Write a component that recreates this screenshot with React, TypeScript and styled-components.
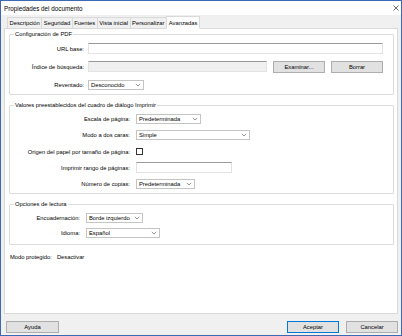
import styled, { createGlobalStyle } from 'styled-components';

const GlobalStyle = createGlobalStyle`
    html, body {
        margin: 0;
        padding: 0;
        background: #ffffff;
    }
    body {
        font-family: "Liberation Sans", Arial, sans-serif;
        font-size: 5.8px;
        color: #000000;
    }
    * {
        box-sizing: border-box;
    }
`;

const tabs = ['Descripción', 'Seguridad', 'Fuentes', 'Vista inicial', 'Personalizar', 'Avanzadas'];

const Chevron = () => (
    <svg width="6" height="4" viewBox="0 0 6 4">
        <path d="M0.8 0.9 L3 3 L5.2 0.9" fill="none" stroke="#666" strokeWidth="0.7" />
    </svg>
);

interface SelectProps {
    value: string;
    width: number;
}

const Select = ({ value, width }: SelectProps) => (
    <SelectBox $width={width}>
        <span>{value}</span>
        <Chevron />
    </SelectBox>
);

const App = () => {
    return (
        <>
            <GlobalStyle />
            <Window>
                <TitleBar>
                    <span>Propiedades del documento</span>
                    <svg width="6" height="6" viewBox="0 0 6 6">
                        <path d="M0.5 0.5 L5.5 5.5 M5.5 0.5 L0.5 5.5" stroke="#444" strokeWidth="0.8" />
                    </svg>
                </TitleBar>
                <TabStrip>
                    {tabs.map((t) => (
                        <Tab key={t} $active={t === 'Avanzadas'}>
                            {t}
                        </Tab>
                    ))}
                </TabStrip>
                <Panel>
                    <Group>
                        <Legend>Configuración de PDF</Legend>
                        <FormGrid $labelWidth={74} $rowGap={7} $rowHeight={11}>
                            <Label>URL base:</Label>
                            <TextInput />
                            <Label>Índice de búsqueda:</Label>
                            <InlineRow>
                                <TextInput $disabled />
                                <Button $width={52}>Examinar...</Button>
                                <Button $width={52}>Borrar</Button>
                            </InlineRow>
                            <Label>Reventado:</Label>
                            <Select value="Desconocido" width={56} />
                        </FormGrid>
                    </Group>
                    <Group>
                        <Legend>Valores preestablecidos del cuadro de diálogo Imprimir</Legend>
                        <FormGrid $labelWidth={120} $rowGap={6.25} $rowHeight={10} $colGap={6}>
                            <Label>Escala de página:</Label>
                            <Select value="Predeterminada" width={65} />
                            <Label>Modo a dos caras:</Label>
                            <Select value="Simple" width={114} />
                            <Label>Origen del papel por tamaño de página:</Label>
                            <Checkbox />
                            <Label>Imprimir rango de páginas:</Label>
                            <TextInput $width={96} />
                            <Label>Número de copias:</Label>
                            <Select value="Predeterminada" width={59} />
                        </FormGrid>
                    </Group>
                    <Group $bottom={6}>
                        <Legend>Opciones de lectura</Legend>
                        <FormGrid $labelWidth={70} $rowGap={5} $rowHeight={10} $colGap={6}>
                            <Label>Encuadernación:</Label>
                            <Select value="Borde izquierdo" width={57} />
                            <Label>Idioma:</Label>
                            <Select value="Español" width={74} />
                        </FormGrid>
                    </Group>
                    <ProtectedRow>
                        <span>Modo protegido:</span>
                        <span>Desactivar</span>
                    </ProtectedRow>
                </Panel>
                <Footer>
                    <Button $width={53} $height={12}>
                        Ayuda
                    </Button>
                    <FooterRight>
                        <Button $width={52} $height={12} $primary>
                            Aceptar
                        </Button>
                        <Button $width={52} $height={12}>
                            Cancelar
                        </Button>
                    </FooterRight>
                </Footer>
            </Window>
        </>
    );
};

const Window = styled.div`
    width: 402px;
    height: 336px;
    border: 1px solid #3d68b4;
    background: #f0f0f0;
    display: flex;
    flex-direction: column;
`;

const TitleBar = styled.div`
    height: 14px;
    background: #ffffff;
    display: flex;
    align-items: center;
    justify-content: space-between;
    padding: 0 2px 0 3px;
    font-size: 6.3px;
`;

const TabStrip = styled.div`
    display: flex;
    align-items: flex-end;
    height: 13px;
    padding-left: 7px;
    position: relative;
    z-index: 1;
`;

const Tab = styled.div<{ $active?: boolean }>`
    height: ${(p) => (p.$active ? '13px' : '11px')};
    padding: 0 ${(p) => (p.$active ? '2px' : '1.5px')};
    display: flex;
    align-items: center;
    border: 1px solid #d9d9d9;
    border-bottom: ${(p) => (p.$active ? '1px solid #ffffff' : 'none')};
    margin-left: -1px;
    background: ${(p) => (p.$active ? '#ffffff' : '#f0f0f0')};
    margin-bottom: ${(p) => (p.$active ? '-1px' : '0')};
    white-space: nowrap;
`;

const Panel = styled.div`
    height: 286px;
    margin: 0 3px;
    background: #ffffff;
    border: 1px solid #d9d9d9;
    padding: 1px 3px 0 4px;
    display: flex;
    flex-direction: column;
`;

const Group = styled.fieldset<{ $bottom?: number }>`
    margin: 0 0 6px 0;
    padding: 5px 0 ${(p) => p.$bottom ?? 4}px 0;
    border: 1px solid #dcdcdc;
    border-radius: 1px;
    min-width: 0;
`;

const Legend = styled.legend`
    margin-left: 4px;
    padding: 0 1px;
    line-height: 8px;
    height: 8px;
`;

const FormGrid = styled.div<{ $labelWidth: number; $rowGap: number; $rowHeight: number; $colGap?: number }>`
    display: grid;
    grid-template-columns: ${(p) => p.$labelWidth}px 1fr;
    grid-auto-rows: ${(p) => p.$rowHeight}px;
    row-gap: ${(p) => p.$rowGap}px;
    column-gap: ${(p) => p.$colGap ?? 4}px;
    align-items: center;
    justify-items: start;
    padding-right: 10px;
`;

const Label = styled.div`
    justify-self: end;
    white-space: nowrap;
`;

const InlineRow = styled.div`
    display: flex;
    gap: 6px;
    width: 100%;
    height: 12px;
    align-items: center;
`;

const TextInput = styled.div<{ $width?: number; $disabled?: boolean }>`
    width: ${(p) => (p.$width ? `${p.$width}px` : '100%')};
    flex: ${(p) => (p.$width ? 'none' : '1')};
    height: 11px;
    background: ${(p) => (p.$disabled ? '#f0f0f0' : '#ffffff')};
    border: 1px solid #e3e3e3;
    border-top-color: #9a9a9a;
`;

const SelectBox = styled.div<{ $width: number }>`
    width: ${(p) => p.$width}px;
    height: 10px;
    background: #ffffff;
    border: 1px solid #c4c4c4;
    display: flex;
    align-items: center;
    justify-content: space-between;
    padding: 0 2px 0 2px;
    white-space: nowrap;
`;

const Checkbox = styled.div`
    width: 7px;
    height: 7px;
    border: 1px solid #333333;
    background: #ffffff;
`;

const Button = styled.div<{ $width: number; $height?: number; $primary?: boolean }>`
    width: ${(p) => p.$width}px;
    height: ${(p) => p.$height ?? 12}px;
    flex: none;
    background: #e1e1e1;
    border: 1px solid ${(p) => (p.$primary ? '#0078d7' : '#adadad')};
    display: flex;
    align-items: center;
    justify-content: center;
    white-space: nowrap;
`;

const ProtectedRow = styled.div`
    display: flex;
    gap: 5px;
    padding-left: 1px;
    margin-top: 3px;
`;

const Footer = styled.div`
    display: flex;
    justify-content: space-between;
    padding: 7px 3px 0 5px;
`;

const FooterRight = styled.div`
    display: flex;
    gap: 7px;
`;

export default App;
